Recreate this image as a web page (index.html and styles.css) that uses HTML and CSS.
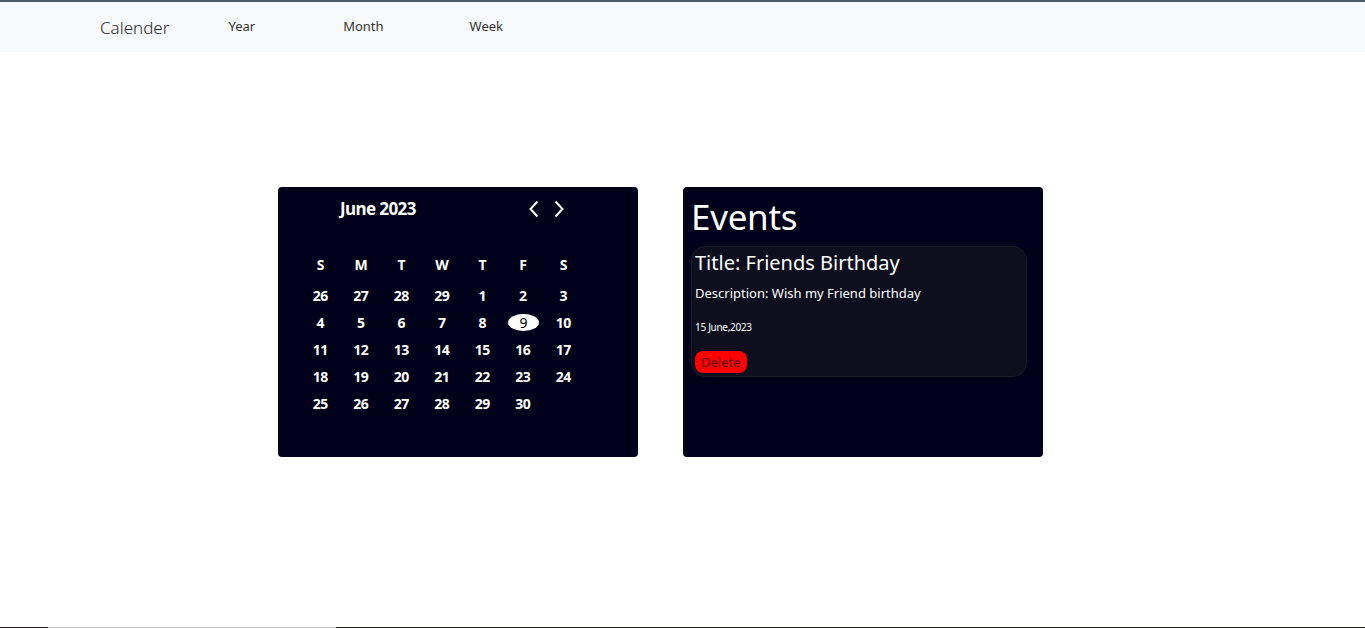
FILE: index.html
```html
<!DOCTYPE html>
<html lang="en">
<head>
<meta charset="utf-8">
<title>Calender</title>
<link rel="stylesheet" href="styles.css">
</head>
<body>
<header class="navbar">
  <span class="brand">Calender</span>
  <nav class="nav-links">
    <a class="nav-link link-year">Year</a>
    <a class="nav-link link-month">Month</a>
    <a class="nav-link link-week">Week</a>
  </nav>
</header>
<main class="main">
  <section class="card calendar">
    <div class="cal-header">
      <span class="cal-title">June 2023</span>
      <div class="cal-arrows">
        <svg class="arrow" width="12" height="18" viewBox="0 0 12 18"><path d="M9.5 1.5 L2.5 9 L9.5 16.5" fill="none" stroke="#fff" stroke-width="2"/></svg>
        <svg class="arrow" width="12" height="18" viewBox="0 0 12 18"><path d="M2.5 1.5 L9.5 9 L2.5 16.5" fill="none" stroke="#fff" stroke-width="2"/></svg>
      </div>
    </div>
    <div class="cal-grid weekdays">
      <span>S</span><span>M</span><span>T</span><span>W</span><span>T</span><span>F</span><span>S</span>
    </div>
    <div class="cal-grid days">
      <span>26</span><span>27</span><span>28</span><span>29</span><span>1</span><span>2</span><span>3</span>
      <span>4</span><span>5</span><span>6</span><span>7</span><span>8</span><span><b class="today">9</b></span><span>10</span>
      <span>11</span><span>12</span><span>13</span><span>14</span><span>15</span><span>16</span><span>17</span>
      <span>18</span><span>19</span><span>20</span><span>21</span><span>22</span><span>23</span><span>24</span>
      <span>25</span><span>26</span><span>27</span><span>28</span><span>29</span><span>30</span><span></span>
    </div>
  </section>
  <section class="card events">
    <h1 class="events-title">Events</h1>
    <div class="event">
      <h2 class="event-title">Title: Friends Birthday</h2>
      <p class="event-desc">Description: Wish my Friend birthday</p>
      <p class="event-date">15 June,2023</p>
      <button class="delete-btn">Delete</button>
    </div>
  </section>
</main>
<div class="taskbar"><span class="tb-a"></span><span class="tb-b"></span><span class="tb-c"></span></div>
</body>
</html>
```
FILE: styles.css
```css
* { box-sizing: border-box; }
html, body { margin: 0; padding: 0; }
body {
  font-family: "Noto Sans", "Open Sans", sans-serif;
  background: #ffffff;
  border-top: 2px solid #4d5c68;
  height: 628px;
  overflow: hidden;
}
.navbar {
  height: 50px;
  background: #f8f9fa;
  display: flex;
  align-items: center;
  padding-left: 100px;
}
.brand {
  font-size: 17px;
  font-weight: 300;
  color: #2b2b2b;
  margin-top: 0;
}
.nav-links {
  display: flex;
  margin-top: -3px;
}
.nav-link {
  font-size: 13px;
  color: #333;
  font-weight: 400;
}
.link-year { margin-left: 59px; }
.link-month { margin-left: 88px; }
.link-week { margin-left: 86px; }

.main {
  display: flex;
  gap: 45px;
  padding-left: 278px;
  padding-top: 135px;
}
.card {
  width: 360px;
  height: 270px;
  background: #00001a;
  border-radius: 4px;
  color: #fff;
}
.calendar { padding: 6px 0 0 22px; }
.cal-header {
  height: 30px;
  display: flex;
  align-items: center;
}
.cal-title {
  font-size: 17px;
  font-weight: 700;
  letter-spacing: -0.6px;
  margin-left: 40px;
}
.cal-arrows {
  display: flex;
  gap: 13px;
  margin-left: 112px;
  margin-top: 1px;
}
.arrow { display: block; }
.cal-grid {
  display: grid;
  grid-template-columns: repeat(7, 40.5px);
  text-align: center;
  font-weight: 700;
  font-size: 14px;
}
.weekdays {
  margin-top: 28px;
  margin-bottom: 4px;
}
.cal-grid span {
  height: 27px;
  line-height: 27px;
  display: flex;
  align-items: center;
  justify-content: center;
  letter-spacing: -0.5px;
}
.today {
  display: inline-flex;
  align-items: center;
  justify-content: center;
  width: 31px;
  height: 17px;
  border-radius: 50%;
  background: #fff;
  color: #000;
  font-weight: 400;
  margin-left: 1px;
}

.events { padding: 8px 16px 0 8px; }
.events-title {
  margin: 0;
  font-size: 35px;
  font-weight: 400;
  line-height: 44px;
  letter-spacing: -0.3px;
}
.event {
  margin-top: 7px;
  height: 131px;
  background: #0e0e1e;
  border: 1px solid #1a1a2a;
  border-radius: 14px;
  padding: 2px 3px;
}
.event-title {
  margin: 0;
  font-size: 20px;
  font-weight: 400;
  line-height: 28px;
}
.event-desc {
  margin: 5px 0 0;
  font-size: 13px;
  line-height: 22px;
}
.event-date {
  margin: 16px 0 0;
  font-size: 10px;
  line-height: 14px;
  letter-spacing: -0.3px;
}
.delete-btn {
  margin-top: 17px;
  height: 22px;
  padding: 0 6px;
  border: none;
  border-radius: 8px;
  background: #ff0000;
  color: #5a0000;
  font-family: inherit;
  font-size: 13px;
  line-height: 22px;
}
.taskbar {
  position: fixed;
  left: 0;
  right: 0;
  bottom: 0;
  height: 1px;
  display: flex;
}
.tb-a { width: 48px; background: #2a1d20; }
.tb-b { width: 288px; background: #c4c4c4; }
.tb-c { flex: 1; background: #2a2424; }
```
